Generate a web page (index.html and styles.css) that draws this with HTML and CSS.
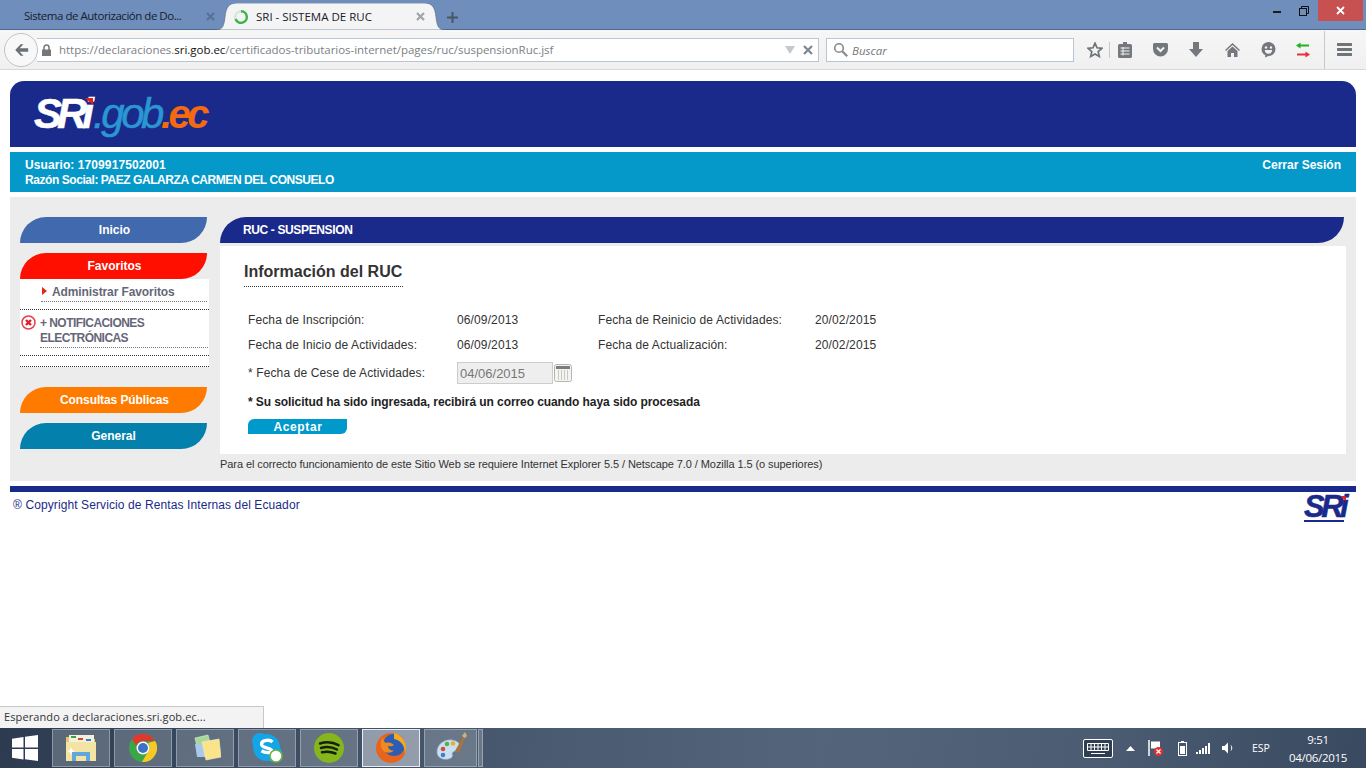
FILE: index.html
```html
<!DOCTYPE html>
<html lang="es">
<head>
<meta charset="utf-8">
<title>SRI - SISTEMA DE RUC</title>
<link rel="stylesheet" href="styles.css">
</head>
<body>
<div class="screen">
  <div class="titlebar">
    <div class="tab tab-idle"><span class="tab-text">Sistema de Autorización de Do...</span><svg class="tab-x" width="9" height="9" viewBox="0 0 9 9"><path d="M1 1l7 7M8 1l-7 7" stroke="#5a7194" stroke-width="2.200"/></svg></div>
    <div class="tab tab-on">
      <svg class="tab-shape" viewBox="0 0 229 27" preserveAspectRatio="none"><path d="M0 27C7 27 8 22 9 14C10 4 13 0 21 0H208C216 0 219 4 220 14C221 22 222 27 229 27Z" fill="#f4f4f4" stroke="#55708f" stroke-width=".7"/></svg>
      <svg class="spin" width="16" height="16" viewBox="0 0 16 16"><circle cx="8" cy="8" r="5.800" fill="none" stroke="#d5e8d5" stroke-width="2.400"/><path d="M8 2.200A5.800 5.800 0 1 1 2.600 10" fill="none" stroke="#3cb54a" stroke-width="2.400"/></svg>
      <span class="tab-text tab-text-on">SRI - SISTEMA DE RUC</span><svg class="tab-x tab-x-on" width="9" height="9" viewBox="0 0 9 9"><path d="M1 1l7 7M8 1l-7 7" stroke="#a0a5ab" stroke-width="2.200"/></svg>
    </div>
    <svg class="plus" width="11" height="11" viewBox="0 0 11 11"><path d="M5.500 0v11M0 5.500h11" stroke="#4a5462" stroke-width="2"/></svg>
    <div class="winctl">
      <svg class="min" width="8" height="3" viewBox="0 0 8 3"><rect width="8" height="2" y="1" fill="#1b1b1b"/></svg>
      <svg class="restore" width="10" height="10" viewBox="0 0 10 10"><path d="M2.500 2.500V.5h7v7h-2" fill="none" stroke="#111"/><rect x=".5" y="2.500" width="7" height="7" fill="none" stroke="#111"/></svg>
      <div class="close"><svg width="9" height="9" viewBox="0 0 9 9"><path d="M1 1l7 7M8 1l-7 7" stroke="#fff" stroke-width="1.800"/></svg></div>
    </div>
  </div>

  <div class="toolbar">
    <div class="back"><svg width="15" height="14" viewBox="0 0 18 16"><path d="M8 1L1.500 8 8 15h3.400L6.800 10H17V6H6.800L11.400 1Z" fill="#6a7076"/></svg></div>
    <div class="urlbar">
      <svg class="lock" width="11" height="12" viewBox="0 0 11 12"><path d="M3 6V3.600a2.500 2.500 0 0 1 5 0V6" fill="none" stroke="#777" stroke-width="1.500"/><rect x="1" y="5.500" width="9" height="6.500" fill="#777"/></svg>
      <span class="url">https://declaraciones.<b>sri.gob.ec</b>/certificados-tributarios-internet/pages/ruc/suspensionRuc.jsf</span>
      <svg class="drop" width="10" height="8" viewBox="0 0 10 8"><path d="M0 0h10L5 8Z" fill="#c3c9ce"/></svg>
      <svg class="stop" width="10" height="10" viewBox="0 0 10 10"><path d="M1 1l8 8M9 1l-8 8" stroke="#7c8791" stroke-width="2.200"/></svg>
    </div>
    <div class="search">
      <svg width="15" height="15" viewBox="0 0 15 15"><circle cx="6" cy="6" r="4.300" fill="none" stroke="#8a8a8a" stroke-width="1.600"/><path d="M9.200 9.200l5 5" stroke="#8a8a8a" stroke-width="2.200"/></svg>
      <span class="search-text">Buscar</span>
    </div>
    <div class="tools">
      <svg class="t-star" width="16" height="16" viewBox="0 0 16 16"><path d="M8 1.200l2 4.600 5 .5-3.800 3.300 1.100 4.900L8 12l-4.300 2.500 1.100-4.900L1 6.300l5-.5Z" fill="none" stroke="#6f7478" stroke-width="1.700"/></svg>
      <i class="t-sep"></i>
      <svg class="t-clip" width="14" height="16" viewBox="0 0 14 16"><path d="M5 0h4v2h3.500a1.500 1.500 0 0 1 1.500 1.500V14.500a1.500 1.500 0 0 1-1.500 1.500H1.500A1.500 1.500 0 0 1 0 14.500V3.500A1.500 1.500 0 0 1 1.500 2H5Z" fill="#74787c"/><path d="M2.500 6h9M2.500 9h9M2.500 12h9M5 5v8.500" stroke="#f3f3f3"/></svg>
      <svg class="t-pocket" width="15" height="14" viewBox="0 0 15 14"><path d="M1.500 0h12A1.500 1.500 0 0 1 15 1.500V6A7.500 7.500 0 0 1 0 6V1.500A1.500 1.500 0 0 1 1.500 0Z" fill="#74787c"/><path d="M4 4.500l3.500 3.500L11 4.500" fill="none" stroke="#f3f3f3" stroke-width="2"/></svg>
      <svg class="t-down" width="14" height="15" viewBox="0 0 14 15"><path d="M4 0h6v7h4l-7 8-7-8h4Z" fill="#74787c"/></svg>
      <svg class="t-home" width="15" height="14" viewBox="0 0 15 14"><path d="M7.500 0L15 7l-1 1-6.500-6L1 8 0 7Z" fill="#74787c"/><path d="M2.500 8l5-4.500 5 4.500v6H9V10H6v4H2.500Z" fill="#74787c"/></svg>
      <svg class="t-smile" width="15" height="16" viewBox="0 0 15 16"><path d="M7.500 0a7 7 0 0 1 0 14L4 15.500l.4-2.300A7 7 0 0 1 7.500 0Z" fill="#74787c"/><circle cx="5" cy="5.500" r="1.200" fill="#f3f3f3"/><circle cx="10" cy="5.500" r="1.200" fill="#f3f3f3"/><path d="M3.800 8h7.400a3.700 3.700 0 0 1-7.400 0Z" fill="#f3f3f3"/></svg>
      <svg class="t-arrows" width="14" height="16" viewBox="0 0 14 16"><path d="M0 3.500l4.500-3v2H13v2H4.500v2Z" fill="#1fb31f"/><path d="M14 12.500l-4.500-3v2H1v2h8.500v2Z" fill="#e8303c"/></svg>
      <i class="t-sep t-sep-b"></i>
      <svg class="t-menu" width="15" height="13" viewBox="0 0 15 13"><path d="M1 0h13a1 1 0 0 1 0 3H1a1 1 0 0 1 0-3ZM1 5h13a1 1 0 0 1 0 3H1a1 1 0 0 1 0-3ZM1 10h13a1 1 0 0 1 0 3H1a1 1 0 0 1 0-3Z" fill="#6f7478"/></svg>
    </div>
  </div>

  <main class="page">
    <header class="banner">
      <span class="logo"><span class="l-sri">SRi</span><span class="l-gob">.gob</span><span class="l-ec">.ec</span><svg class="logo-tick" width="8" height="7" viewBox="0 0 8 7"><path d="M0 0h8v7Z" fill="#e02020"/></svg></span>
    </header>
    <div class="userbar">
      <div><div class="user-id">Usuario: 1709917502001</div><div class="user-name">Razón Social: PAEZ GALARZA CARMEN DEL CONSUELO</div></div>
      <div>Cerrar Sesión</div>
    </div>
    <div class="panel">
      <nav class="side">
        <a class="leaf leaf-blue">Inicio</a>
        <a class="leaf leaf-red">Favoritos</a>
        <div class="favs">
          <div class="fav-one"><svg width="5" height="8" viewBox="0 0 5 8"><path d="M0 0l5 4-5 4Z" fill="#e02818"/></svg><span>Administrar Favoritos</span></div>
          <div class="fav-two">
            <svg class="fav-err" width="15" height="15" viewBox="0 0 15 15"><circle cx="7.500" cy="7.500" r="6.500" fill="#fff" stroke="#e8404a" stroke-width="1.500"/><path d="M5 5l5 5M10 5l-5 5" stroke="#d8202c" stroke-width="2.400"/></svg>
            <span>+ NOTIFICACIONES ELECTRÓNICAS</span>
          </div>
          <div class="fav-end"></div>
        </div>
        <a class="leaf leaf-orange">Consultas Públicas</a>
        <a class="leaf leaf-teal">General</a>
      </nav>
      <section class="content">
        <div class="leaf-head">RUC - SUSPENSION</div>
        <div class="sheet">
          <h1>Información del RUC</h1>
          <div class="facts">
            <span>Fecha de Inscripción:</span><span>06/09/2013</span><span>Fecha de Reinicio de Actividades:</span><span>20/02/2015</span>
            <span>Fecha de Inicio de Actividades:</span><span>06/09/2013</span><span>Fecha de Actualización:</span><span>20/02/2015</span>
          </div>
          <div class="cease">
            <span class="cease-label">* Fecha de Cese de Actividades:</span>
            <input class="date" value="04/06/2015" disabled>
            <svg width="18" height="18" viewBox="0 0 18 18"><rect x=".5" y=".5" width="17" height="17" rx="2" fill="#f4f4f1" stroke="#b5b5b0"/><rect x="2" y="2" width="14" height="3" fill="#77807c"/><path d="M4.500 6v10M7.500 6v10M10.500 6v10M13.500 6v10" stroke="#c8c8c4"/></svg>
          </div>
          <p class="msg">* Su solicitud ha sido ingresada, recibirá un correo cuando haya sido procesada</p>
          <button class="accept" type="button">Aceptar</button>
        </div>
        <p class="note">Para el correcto funcionamiento de este Sitio Web se requiere Internet Explorer 5.5 / Netscape 7.0 / Mozilla 1.5 (o superiores)</p>
      </section>
    </div>
    <footer class="foot">
      <span class="copy">® Copyright Servicio de Rentas Internas del Ecuador</span>
      <span class="mini-logo"><span>SRi</span><i></i><svg width="6" height="5" viewBox="0 0 6 5"><path d="M0 0h6v5Z" fill="#e02020"/></svg></span>
    </footer>
  </main>

  <div class="statusrow"><div class="status">Esperando a declaraciones.sri.gob.ec...</div></div>

  <div class="taskbar">
    <svg class="win" width="26" height="26" viewBox="0 0 26 26"><path d="M0 3.800L11.500 2v10.400H0ZM13 1.800L26 0v12.400H13ZM0 14h11.500v10.400L0 22.700ZM13 14h13v12l-13-1.800Z" fill="#fff"/></svg>
    <div class="task">
      <svg width="32" height="30" viewBox="0 0 32 30"><path d="M1 4h10l2 2h17v22H1Z" fill="#e3c76c"/><rect x="4" y="2" width="25" height="8" fill="#f4f0dc"/><rect x="6" y="3" width="5" height="2" fill="#3aa14a"/><rect x="13" y="5" width="5" height="2" fill="#d04a3a"/><rect x="21" y="6" width="5" height="2" fill="#3a7fd0"/><path d="M1 9h30v19H1Z" fill="#f4e4a4"/><path d="M7 19h18v9h-4v-5H11v5H7Z" fill="#5fa8de"/><path d="M6 14l1 3 3 1-3 1-1 3-1-3-3-1 3-1Z" fill="#fff"/></svg>
    </div>
    <div class="task">
      <svg width="28" height="28" viewBox="0 0 28 28"><circle cx="14" cy="14" r="14" fill="#3aa648"/><path d="M14 0a14 14 0 0 1 12.100 7H14a7 7 0 0 0-6.700 5L3 5a14 14 0 0 1 11-5Z" fill="#e0382e"/><path d="M26.100 7A14 14 0 0 1 13 28l6-10.500A7 7 0 0 0 19 9Z" fill="#f7c925"/><circle cx="14" cy="14" r="6.500" fill="#fff"/><circle cx="14" cy="14" r="5" fill="#3e72c6"/></svg>
    </div>
    <div class="task">
      <svg width="32" height="28" viewBox="0 0 32 28"><path d="M6 4l13-3 3 12-13 4Z" fill="#a8d898" stroke="#dfeeda" stroke-width=".6"/><path d="M6 10h12v13H8Z" fill="#a9c9ea"/><path d="M13 8l17-3 2 18-15 3Z" fill="#f9e48a" stroke="#fbf1c2" stroke-width=".6"/></svg>
    </div>
    <div class="task">
      <svg width="31" height="30" viewBox="0 0 31 30"><circle cx="8" cy="8" r="8" fill="#12a5e8"/><circle cx="21" cy="20" r="9" fill="#12a5e8"/><circle cx="14.500" cy="14.500" r="13.500" fill="#12a5e8"/><path d="M20.500 9C18 6.500 10 6.500 9.500 11c-.4 4.500 10 3.500 10 6.500s-6.500 2.500-10 .3" fill="none" stroke="#fff" stroke-width="3.400"/><circle cx="24" cy="23" r="6" fill="#fff" stroke="#6eb43f" stroke-width="1.600"/></svg>
    </div>
    <div class="task">
      <svg width="30" height="30" viewBox="0 0 30 30"><circle cx="15" cy="15" r="15" fill="#85b61c"/><path d="M6 10.500c6-1.800 13-1.300 18.500 1.600M7 15c5-1.400 11-1 16 1.500M8 19.300c4.500-1.100 9-.8 13.500 1.200" fill="none" stroke="#15200c" stroke-width="2.500" stroke-linecap="round"/></svg>
    </div>
    <div class="task task-on">
      <svg width="32" height="32" viewBox="0 0 32 32"><circle cx="16" cy="16" r="15" fill="#e8641c"/><circle cx="19" cy="13" r="11" fill="#2a5db4"/><path d="M19 1a15 15 0 0 1 12 15c0 2-.5 4-1.300 5.500.6-6-2.700-13-10.700-14.500Z" fill="#f7a822"/><path d="M8 5c0 3 1 5 3 6 3-1 6 0 8 2-2 1.500-4 1.500-6 1 0 3 3 5 6 4.500-3 3-8 3-11 0C5 15 5 9 8 5Z" fill="#f08a20"/></svg>
    </div>
    <div class="task task-paint">
      <svg width="32" height="32" viewBox="0 0 32 32"><path d="M2 20C2 12 10 7 17 8c6 1 9 4 8 8-1 3-5 2-7 4s1 4-2 6c-5 3-14 1-14-6Z" fill="#c9e0f2" stroke="#8fb4d2" stroke-width=".6"/><circle cx="8" cy="17" r="2.300" fill="#d8483c"/><circle cx="12" cy="12" r="2.300" fill="#5cae48"/><circle cx="18" cy="11.500" r="2.300" fill="#e8b02c"/><circle cx="8" cy="23" r="2.300" fill="#3f7ec8"/><path d="M20 19L29 3l2 1-7 17Z" fill="#a8743c"/><path d="M27 4l3-4 2 4-2 2Z" fill="#d2b07e"/></svg>
    </div>
    <i class="task-stub"></i>
    <div class="tray">
      <svg class="tr-kbd" width="30" height="19" viewBox="0 0 30 19"><rect x=".5" y=".5" width="29" height="18" rx="1.500" fill="#2f3e52" stroke="#fff"/><path d="M4.500 4.500h21v7h-21ZM4.500 8h21M8 4.500v7M11.500 4.500v7M15 4.500v7M18.500 4.500v7M22 4.500v7M8 14.500h14" fill="none" stroke="#fff"/></svg>
      <svg class="tr-up" width="9" height="5" viewBox="0 0 9 5"><path d="M4.500 0L9 5H0Z" fill="#fff"/></svg>
      <svg class="tr-flag" width="15" height="16" viewBox="0 0 15 16"><path d="M1 0v16" stroke="#fff" stroke-width="1.500"/><path d="M3 1.500h9v7H3Z" fill="#fff"/><circle cx="10.500" cy="11.500" r="4.500" fill="#e03030"/><path d="M8.500 9.500l4 4M12.500 9.500l-4 4" stroke="#fff" stroke-width="1.200"/></svg>
      <svg class="tr-bat" width="9" height="15" viewBox="0 0 9 15"><rect x=".5" y="1.500" width="8" height="13" fill="none" stroke="#fff"/><rect x="3" y="0" width="3" height="1.500" fill="#fff"/><rect x="2" y="5" width="5" height="8" fill="#fff"/></svg>
      <svg class="tr-sig" width="15" height="11" viewBox="0 0 15 11"><path d="M0 9h2v2H0ZM3 7h2v4H3ZM6 5h2v6H6ZM9 3h2v8H9ZM12 0h2v11h-2Z" fill="#fff"/></svg>
      <svg class="tr-vol" width="12" height="12" viewBox="0 0 12 12"><path d="M0 4h2.500L6 .5v11L2.500 8H0Z" fill="#fff"/><path d="M9 3.500c1 1.500 1 3.500 0 5" fill="none" stroke="#fff"/></svg>
      <span class="tr-lang">ESP</span>
      <span class="tr-clock"><span>9:51</span><span>04/06/2015</span></span>
    </div>
  </div>
</div>
</body>
</html>
```

FILE: styles.css
```css
* { box-sizing: border-box; }
html, body { margin: 0; padding: 0; background: #fff; }
body { font-family: "Liberation Sans", Arial, sans-serif; font-size: 12px; overflow: hidden; }
svg { display: block; flex: none; }
.screen { width: 1366px; height: 768px; display: flex; flex-direction: column; overflow: hidden; }

.titlebar { height: 30px; background: #6f8ebc; border-bottom: 1px solid #4f6a8e; display: flex; align-items: flex-start; font-family: "Open Sans", "Noto Sans", sans-serif; }
.tab { position: relative; display: flex; align-items: center; }
.tab-idle { width: 216px; height: 30px; padding-left: 24px; }
.tab-text { font-size: 11.5px; color: #17202e; white-space: nowrap; letter-spacing: -.48px; }
.tab-x { position: absolute; left: 206px; top: 12px; }
.tab-on { width: 229px; height: 27px; margin-top: 3px; padding-left: 17px; }
.tab-shape { position: absolute; left: 0; top: 0; width: 229px; height: 27px; }
.spin { position: relative; margin-right: 7px; }
.tab-text-on { position: relative; letter-spacing: 0; }
.tab-x-on { left: 200px; top: 9px; }
.plus { margin: 12px 0 0 2px; }
.winctl { margin-left: auto; display: flex; align-items: flex-start; }
.min { margin: 10px 0 0 0; }
.restore { margin: 6px 0 0 18px; }
.close { width: 45px; height: 21px; background: #c75050; margin: 0 3px 0 9px; display: flex; align-items: center; justify-content: center; }

.toolbar { height: 40px; background: linear-gradient(#f6f6f6, #f0f0f0); border-bottom: 1px solid #d8d8d8; display: flex; align-items: center; padding-left: 4px; }
.back { width: 34px; height: 34px; border-radius: 50%; border: 1px solid #bfc4c8; background: #f8f8f8; display: flex; align-items: center; justify-content: center; position: relative; z-index: 1; margin-right: -1px; }
.urlbar { width: 782px; height: 24px; background: #fff; border: 1px solid #b9c5d1; border-left: 0; display: flex; align-items: center; padding-left: 4px; }
.lock { margin-right: 7px; }
.url { font-family: "Open Sans", "Noto Sans", sans-serif; font-size: 11.5px; letter-spacing: -.03px; color: #7b7f85; white-space: nowrap; }
.url b { font-weight: 400; color: #111; }
.drop { margin-left: auto; margin-right: 8px; }
.stop { margin-right: 5px; }
.search { width: 248px; height: 24px; margin-left: 7px; background: #fff; border: 1px solid #b9c5d1; display: flex; align-items: center; padding-left: 6px; gap: 4px; font-family: "Open Sans", "Noto Sans", sans-serif; font-size: 11.5px; font-style: italic; color: #777; }
.search-text { padding-top: 2px; }
.tools { display: flex; align-items: center; height: 100%; }
.t-star { margin-left: 13px; }
.t-sep { width: 1px; height: 16px; background: #c8c8c8; margin-left: 6px; }
.t-clip { margin-left: 8px; }
.t-pocket { margin-left: 21px; }
.t-down { margin-left: 21px; }
.t-home { margin-left: 22px; }
.t-smile { margin-left: 21px; }
.t-arrows { margin-left: 20px; }
.t-sep-b { height: 38px; margin-left: 14px; }
.t-menu { margin-left: 12px; }

.page { flex: 1; min-height: 0; padding: 11px 10px 0; }
.banner { height: 66px; background: #1a2a8a; border-radius: 14px 14px 0 0; padding: 13px 0 0 24px; }
.logo { position: relative; display: inline-flex; align-items: baseline; font-family: "Liberation Sans", sans-serif; font-style: italic; font-size: 42px; line-height: 40px; }
.l-sri { color: #fff; font-weight: 700; letter-spacing: -5px; -webkit-text-stroke: .5px #fff; }
.l-gob { color: #2a96d2; letter-spacing: -3.450px; margin-left: 4px; -webkit-text-stroke: .5px #2a96d2; }
.l-ec { color: #f56a10; font-size: 40px; font-weight: 700; letter-spacing: -3.600px; }
.logo-tick { position: absolute; left: 51px; top: 4px; }
.userbar { height: 40px; margin-top: 5px; background: #0599ca; color: #fff; font-weight: 700; line-height: 15px; padding: 6px 15px 0; display: flex; justify-content: space-between; }
.user-id { letter-spacing: .09px; }
.user-name { letter-spacing: -.44px; }
.panel { height: 284px; margin-top: 5px; background: #ececec; display: flex; padding: 20px 0 0 10px; }
.side { width: 200px; flex: none; display: flex; flex-direction: column; }
.leaf { height: 26px; width: 187px; border-radius: 26px 0 26px 0; color: #fff; font-weight: 700; text-align: center; line-height: 26px; padding-left: 2px; }
.leaf-blue { background: #4169ad; }
.leaf-red { background: #ff0f00; margin-top: 10px; }
.leaf-orange { background: #ff7b00; margin-top: 20px; letter-spacing: -.1px; }
.leaf-teal { background: #0380ab; margin-top: 10px; padding-left: 0; }
.favs { width: 189px; height: 88px; background: #fff; color: #667; font-weight: 700; }
.fav-one { height: 31px; border-bottom: 1px dotted #333; padding: 0 0 0 22px; }
.fav-one svg { position: relative; top: 8px; }
.fav-one span { display: block; margin: -8px 0 0 -1px; height: 23px; line-height: 27px; border-bottom: 1px dotted #777; padding-left: 11px; width: 166px; letter-spacing: -.1px; }
.fav-two { position: relative; height: 46px; border-bottom: 1px dotted #333; padding: 6px 0 0 20px; line-height: 15px; }
.fav-two span { display: block; width: 168px; height: 32px; border-bottom: 1px dotted #777; letter-spacing: -.55px; }
.fav-err { position: absolute; left: 1px; top: 5px; }
.fav-end { height: 11px; border-bottom: 1px dotted #333; }
.content { flex: 1; min-width: 0; }
.leaf-head { width: 1124px; height: 26px; background: #1a2a8a; border-radius: 26px 0 26px 0; color: #fff; font-weight: 700; line-height: 26px; padding-left: 23px; letter-spacing: -.37px; }
.sheet { width: 1126px; height: 208px; margin-top: 3px; background: #fff; padding: 17px 0 0 24px; color: #333; }
h1 { display: inline-block; margin: 0; font-size: 16px; line-height: 18px; height: 24px; padding-right: 1px; border-bottom: 1px dotted #333; font-weight: 700; color: #333; }
.facts { display: grid; grid-template-columns: 209px 141px 217px auto; grid-auto-rows: 25px; margin: 21px 0 0 4px; line-height: 25px; letter-spacing: .12px; }
.cease { display: flex; align-items: center; height: 24px; margin: 3px 0 0 4px; letter-spacing: .12px; }
.cease-label { width: 209px; }
.date { width: 96px; height: 22px; padding: 0 0 0 2px; border: 1px solid #ccc; background: #eee; font: 13px "Liberation Sans", sans-serif; color: #777; -webkit-text-fill-color: #777; opacity: 1; }
.cease svg { margin-left: 1px; }
.msg { margin: 10px 0 0 4px; font-weight: 700; line-height: 15px; color: #222; letter-spacing: -.08px; }
.accept { display: block; width: 99px; height: 15px; margin: 9px 0 0 4px; padding: 1px 0 0 1px; border: 0; border-radius: 6px 0 6px 0; background: #0099cc; color: #fff; font: 700 12px/15px "Liberation Sans", sans-serif; letter-spacing: .6px; text-align: center; }
.note { margin: 4px 0 0; font-size: 11px; line-height: 13px; color: #333; letter-spacing: -.075px; white-space: nowrap; }
.foot { margin-top: 5px; border-top: 6px solid #1a2a8a; display: flex; justify-content: space-between; padding: 6px 8px 0 3px; height: 40px; }
.copy { color: #1a2a8a; line-height: 15px; letter-spacing: .1px; }
.mini-logo { position: relative; width: 44px; height: 27px; margin-top: -4px; font-style: italic; font-weight: 700; color: #1a2a8a; font-size: 31px; line-height: 26px; letter-spacing: -3.500px; -webkit-text-stroke: .5px #1a2a8a; }
.mini-logo i { position: absolute; left: 0; top: 26px; width: 40px; height: 2px; background: #1a2a8a; }
.mini-logo svg { position: absolute; left: 36px; top: 2px; }

.statusrow { height: 22px; }
.status { width: 264px; height: 22px; background: #f3f3f3; border: 1px solid #c8c8c8; border-left: 0; border-bottom: 0; padding-left: 4px; font-family: "Open Sans", "Noto Sans", sans-serif; font-size: 11px; line-height: 20px; letter-spacing: .1px; color: #333; white-space: nowrap; }

.taskbar { height: 40px; background: linear-gradient(100deg, #2c3b50 0%, #3b4b61 18%, #4a5a70 40%, #54657b 60%, #4b5c73 80%, #39495f 100%); display: flex; align-items: center; padding-left: 52px; position: relative; }
.win { position: absolute; left: 12px; top: 7px; }
.task { width: 58px; height: 38px; margin-right: 4px; background: rgba(190,198,206,.3); border: 1px solid rgba(220,226,232,.4); display: flex; align-items: center; justify-content: center; }
.task-on { background: rgba(225,230,236,.5); border-color: #e8edf2; }
.task-paint { margin-right: 1px; width: 53px; }
.task-stub { width: 5px; height: 38px; background: rgba(190,198,206,.3); border: 1px solid rgba(220,226,232,.4); }
.tray { margin-left: auto; display: flex; align-items: center; color: #fff; padding-right: 10px; height: 100%; }
.tr-up { margin-left: 13px; }
.tr-flag { margin-left: 13px; }
.tr-bat { margin-left: 15px; }
.tr-sig { margin-left: 9px; }
.tr-vol { margin-left: 11px; }
.tr-lang { margin-left: 18px; width: 18px; font-family: "Open Sans", "Noto Sans", sans-serif; font-size: 10.5px; }
.tr-clock { margin-left: 10px; padding-top: 2px; width: 76px; display: flex; flex-direction: column; align-items: center; font-family: "Open Sans", "Noto Sans", sans-serif; font-size: 11.5px; line-height: 18px; letter-spacing: -.3px; }
```
